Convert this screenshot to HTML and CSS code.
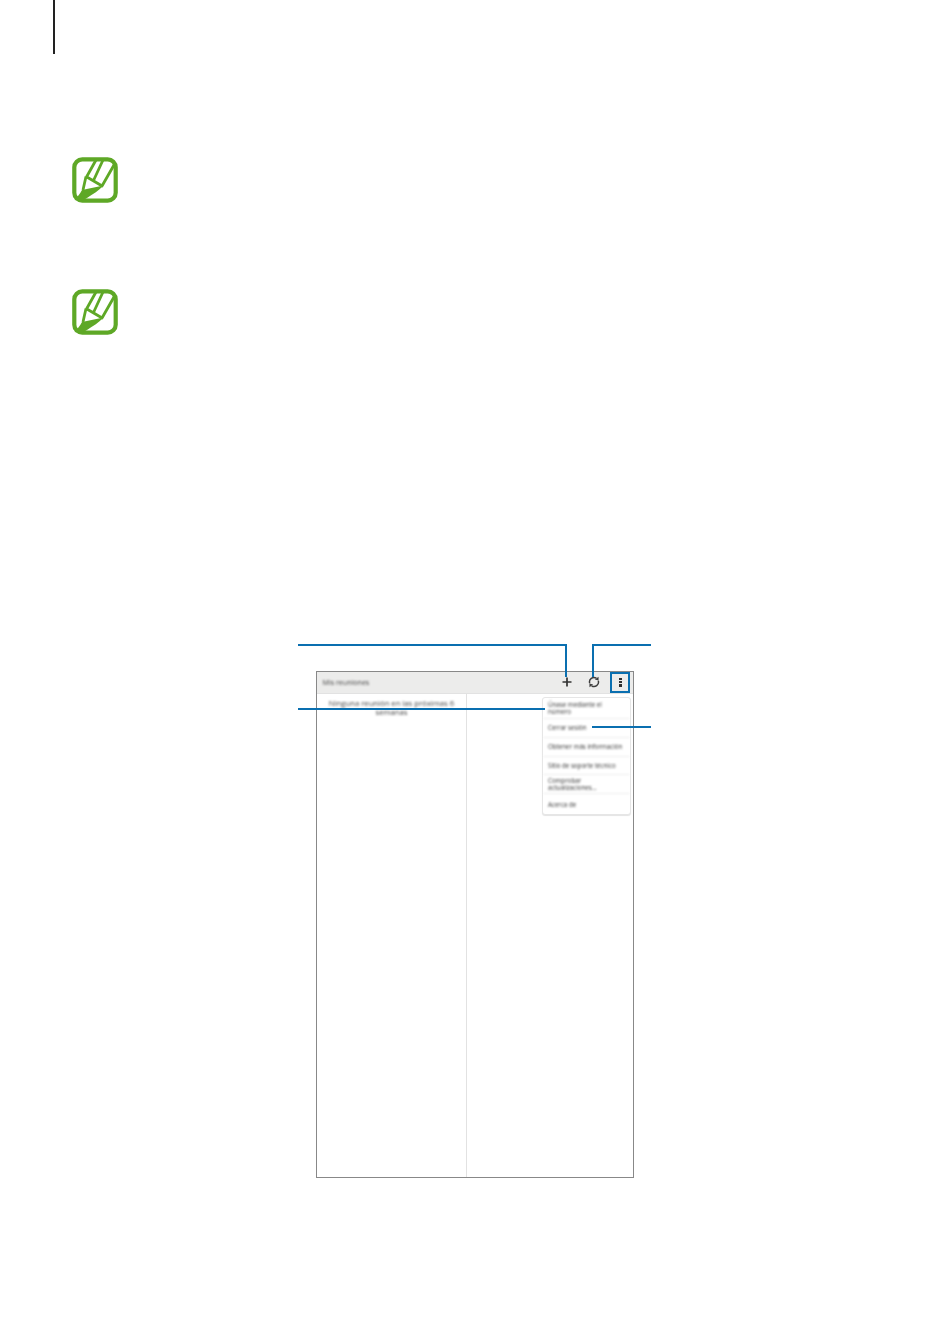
FILE: index.html
```html
<!DOCTYPE html>
<html lang="es">
<head>
<meta charset="utf-8">
<title>Mis reuniones</title>
<link rel="stylesheet" href="styles.css">
</head>
<body>
<div class="page">
  <div class="rule"></div>
  <svg class="note first" viewBox="0 0 46 46" width="46" height="46">
    <rect x="2.3" y="2.3" width="41.4" height="41.4" rx="8" fill="none" stroke="#5ea826" stroke-width="4.2"/>
    <path d="M14.5 20 L24 3 M21.5 23.5 L31 3 M30 29 L42 8 M14 19.5 L31 29.5 M14 19.5 L11 33" fill="none" stroke="#5ea826" stroke-width="2.8"/>
    <path d="M2.5 43 C5.5 39.5 8 37 10 33 L31.5 28.5 C27 33.5 21 37 15 41 C13 42 11.5 43 10 44 Z" fill="#5ea826"/>
  </svg>
  <svg class="note second" viewBox="0 0 46 46" width="46" height="46">
    <rect x="2.3" y="2.3" width="41.4" height="41.4" rx="8" fill="none" stroke="#5ea826" stroke-width="4.2"/>
    <path d="M14.5 20 L24 3 M21.5 23.5 L31 3 M30 29 L42 8 M14 19.5 L31 29.5 M14 19.5 L11 33" fill="none" stroke="#5ea826" stroke-width="2.8"/>
    <path d="M2.5 43 C5.5 39.5 8 37 10 33 L31.5 28.5 C27 33.5 21 37 15 41 C13 42 11.5 43 10 44 Z" fill="#5ea826"/>
  </svg>
  <div class="figure">
    <div class="screen">
      <div class="bar">
        <span class="bar-title">Mis reuniones</span>
        <svg class="tool add" viewBox="0 0 12 12" width="12" height="12"><path d="M1.5 6H10.5M6 1.5V10.5" stroke="#333" stroke-width="1.7" fill="none"/></svg>
        <svg class="tool sync" viewBox="0 0 14 14" width="12" height="12"><path d="M2 8.5A5.2 5.2 0 0 1 9.8 2.6M12 5.5A5.2 5.2 0 0 1 4.2 11.4" stroke="#3d3d3d" stroke-width="1.7" fill="none"/><path d="M12.3 0.8V5.2L8 4.2ZM1.7 13.2V8.8L6 9.8Z" fill="#3d3d3d"/></svg>
        <span class="dots"><i></i><i></i><i></i></span>
      </div>
      <div class="panes">
        <div class="left-pane"><p class="empty">Ninguna reunión en las próximas 6 semanas</p></div>
        <div class="right-pane"></div>
      </div>
    </div>
    <ul class="menu">
      <li>Únase mediante el número</li>
      <li>Cerrar sesión</li>
      <li>Obtener más información</li>
      <li>Sitio de soporte técnico</li>
      <li>Comprobar actualizaciones...</li>
      <li>Acerca de</li>
    </ul>
    <div class="call h c1"></div><div class="call v c1v"></div>
    <div class="call h c2"></div><div class="call v c2v"></div>
    <div class="call h c3"></div>
    <div class="call h c4"></div>
    <div class="highlight"></div>
  </div>
</div>
</body>
</html>
```
FILE: styles.css
```css
html, body {
  margin: 0;
  padding: 0;
  background: #fff;
}
.page {
  width: 950px;
  height: 1344px;
  overflow: hidden;
  position: relative;
  display: flow-root;
  font-family: "Open Sans", "Liberation Sans", sans-serif;
}
.rule {
  width: 2px;
  height: 54px;
  margin-left: 53px;
  background: #222;
}
.note {
  display: block;
  margin-left: 72px;
}
.note.first { margin-top: 103px; }
.note.second { margin-top: 86px; }
.figure {
  position: relative;
  width: 318px;
  height: 507px;
  margin: 336px 0 0 316px;
}
.screen {
  box-sizing: border-box;
  width: 318px;
  height: 507px;
  border: 1px solid #888;
  display: flex;
  flex-direction: column;
}
.bar {
  flex: none;
  background: #ececeb;
  border-bottom: 1px solid #e2e2e2;
  display: flex;
  align-items: center;
  position: relative;
  padding-bottom: 2px;
  height: 19px;
}
.bar-title {
  margin-left: 5.5px;
  font-size: 7.1px;
  color: #444;
  filter: blur(0.85px);
}
.tool {
  position: absolute;
  top: 4px;
}
.tool.add { left: 243.5px; }
.tool.sync { left: 270.5px; }
.dots {
  position: absolute;
  left: 302px;
  top: 5.5px;
  display: flex;
  flex-direction: column;
  gap: 1px;
}
.dots i {
  display: block;
  width: 3px;
  height: 2.4px;
  background: #2e2e2e;
}
.panes {
  flex: 1;
  display: flex;
}
.left-pane {
  width: 149px;
  border-right: 1px solid #e2e2e2;
}
.empty {
  margin: 4.5px 5px 0;
  text-align: center;
  font-size: 7.7px;
  line-height: 9px;
  color: #444;
  filter: blur(0.85px);
}
.right-pane { flex: 1; }
.menu {
  position: absolute;
  left: 226px;
  top: 26px;
  width: 89px;
  height: 118px;
  box-sizing: border-box;
  margin: 0;
  padding: 0;
  list-style: none;
  background: #fff;
  border: 1px solid #e6e6e6;
  border-radius: 3px;
  box-shadow: 0 1px 1px #e4e4e4;
  display: flex;
  flex-direction: column;
}
.menu li {
  padding: 0 5px;
  height: 18px;
  display: flex;
  align-items: center;
  border-bottom: 1px solid #eee;
  font-size: 6.2px;
  line-height: 7px;
  color: #333;
  filter: blur(0.85px);
}
.menu li:first-child { height: 20px; }
.menu li:last-child { border-bottom: 0; height: 20px; }
.call {
  position: absolute;
  background: #0a6fb0;
}
.call.h { height: 2px; }
.call.v { width: 2px; }
.c1 { left: -18px; top: -27px; width: 269px; }
.c1v { left: 249px; top: -27px; height: 33px; }
.c2 { left: 276px; top: -27px; width: 59px; }
.c2v { left: 276px; top: -27px; height: 33px; }
.c3 { left: -18px; top: 37px; width: 247px; }
.c4 { left: 276px; top: 55px; width: 59px; }
.highlight {
  position: absolute;
  left: 294px;
  top: 1px;
  width: 20px;
  height: 21px;
  box-sizing: border-box;
  border: 2px solid #0a6fb0;
}
```
